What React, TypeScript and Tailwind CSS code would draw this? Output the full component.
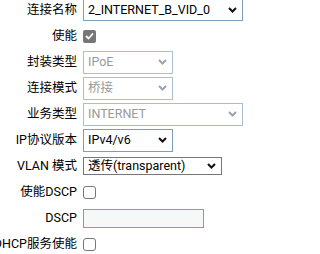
import React from 'react'

const font = { fontFamily: 'Roboto, "Noto Sans CJK SC", sans-serif' }

function Chevron({ disabled }: { disabled?: boolean }) {
  return (
    <svg width="9" height="6" viewBox="0 0 9 6" className="shrink-0">
      <polyline
        points="1,1 4.5,4.5 8,1"
        fill="none"
        stroke={disabled ? '#9aa3ad' : '#111'}
        strokeWidth="2"
      />
    </svg>
  )
}

function Select({
  value,
  width,
  height = 'h-[23px]',
  disabled,
  dark,
}: {
  value: string
  width: string
  height?: string
  disabled?: boolean
  dark?: boolean
}) {
  const border = disabled ? 'border-[#a9bdd3]' : dark ? 'border-[#767676]' : 'border-[#7f9db9]'
  return (
    <div
      className={`${width} ${height} ${border} flex items-center justify-between border bg-white pl-[4px] pr-[5px]`}
    >
      <span className={disabled ? 'text-[#9a9a9a]' : 'text-black'}>{value}</span>
      <Chevron disabled={disabled} />
    </div>
  )
}

function Checkbox({ checked }: { checked?: boolean }) {
  if (checked) {
    return (
      <div className="flex h-[13px] w-[13px] items-center justify-center rounded-[2px] bg-[#767676]">
        <svg width="9" height="8" viewBox="0 0 9 8">
          <polyline points="1,4 3.5,6.5 8,1.5" fill="none" stroke="#fff" strokeWidth="1.8" />
        </svg>
      </div>
    )
  }
  return <div className="h-[13px] w-[13px] rounded-[3px] border border-[#767676] bg-white" />
}

function Row({ label, children }: { label: string; children: React.ReactNode }) {
  return (
    <div className="flex h-[26px] items-center">
      <div className="flex w-[77px] shrink-0 justify-end whitespace-nowrap text-black">{label}</div>
      <div className="ml-[6px] flex items-center">{children}</div>
    </div>
  )
}

export default function App() {
  return (
    <div className="h-[254px] w-[303px] overflow-hidden bg-white text-[12.5px] leading-none" style={font}>
      <div className="-mt-[3px] flex flex-col">
        <Row label="连接名称">
          <Select value="2_INTERNET_B_VID_0" width="w-[160px]" height="h-[22px]" />
        </Row>
        <Row label="使能">
          <Checkbox checked />
        </Row>
        <Row label="封装类型">
          <Select value="IPoE" width="w-[90px]" disabled />
        </Row>
        <Row label="连接模式">
          <Select value="桥接" width="w-[90px]" disabled />
        </Row>
        <Row label="业务类型">
          <Select value="INTERNET" width="w-[160px]" disabled />
        </Row>
        <Row label="IP协议版本">
          <Select value="IPv4/v6" width="w-[90px]" />
        </Row>
        <Row label="VLAN 模式">
          <Select value="透传(transparent)" width="w-[139px]" height="h-[18px]" dark />
        </Row>
        <Row label="使能DSCP">
          <Checkbox />
        </Row>
        <Row label="DSCP">
          <div className="h-[19px] w-[121px] border border-[#7f9db9] bg-[#f7f7f7]" />
        </Row>
        <Row label="DHCP服务使能">
          <Checkbox />
        </Row>
      </div>
    </div>
  )
}
